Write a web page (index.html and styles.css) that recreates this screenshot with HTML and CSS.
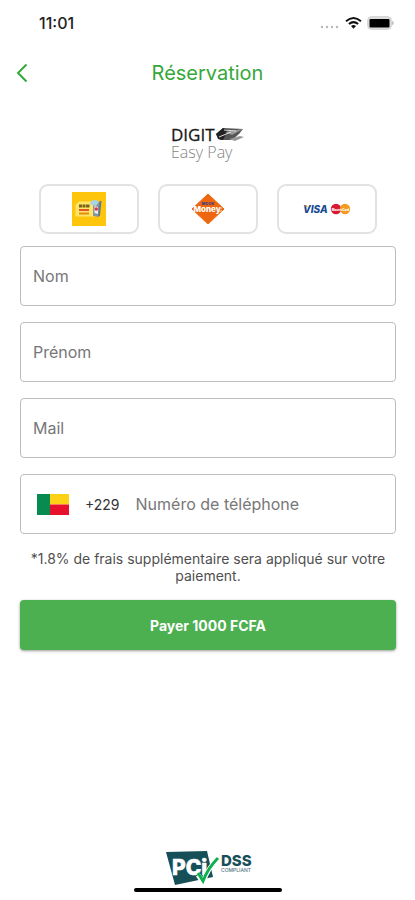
FILE: index.html
```html
<!DOCTYPE html>
<html lang="fr">
<head>
<meta charset="utf-8">
<meta name="viewport" content="width=device-width, initial-scale=1">
<title>Réservation</title>
<link rel="stylesheet" href="styles.css">
</head>
<body>
<div class="screen">
  <div class="status">
    <span class="clock">11:01</span>
    <span class="indicators">
      <svg width="20" height="14" viewBox="0 0 20 14" fill="#b8b8b8" aria-hidden="true">
        <circle cx="2" cy="11" r="1.2"/><circle cx="7" cy="11" r="1.2"/><circle cx="12" cy="11" r="1.2"/><circle cx="17" cy="11" r="1.2"/>
      </svg>
      <svg width="17" height="14" viewBox="0 0 17 14" fill="none" stroke="#111" stroke-width="2" aria-hidden="true">
        <path d="M1 5.200Q8.500-1.300 16 5.200"/><path d="M3.900 8.100Q8.500 4.100 13.100 8.100"/><path d="M6 9.900Q8.500 7.900 11 9.900L8.500 12.700Z" fill="#111" stroke="none"/>
      </svg>
      <svg width="28" height="14" viewBox="0 0 28 14" aria-hidden="true">
        <rect x=".7" y=".7" width="23.600" height="12.600" rx="3.500" fill="#dedede" stroke="#cfcfcf"/>
        <rect x="2.500" y="3" width="20" height="8.500" rx="1" fill="#000"/>
        <path d="M25.300 4.500Q28 7 25.300 9.500Z" fill="#aaa"/>
      </svg>
    </span>
  </div>

  <header class="header">
    <button class="back" type="button" aria-label="Retour">
      <svg width="12" height="20" viewBox="0 0 12 20" fill="none" stroke="#35a83c" stroke-width="2"><path d="M10.500 1.500L2 10L10.500 18.500"/></svg>
    </button>
    <h1 class="title">Réservation</h1>
  </header>

  <main class="content">
    <svg class="brand" width="76" height="40" viewBox="0 0 76 40" role="img" aria-label="Digit Easy Pay">
      <text x="1" y="17" font-size="17" fill="#181818" stroke="#181818" stroke-width=".3">DIGIT</text>
      <text class="thin" x="1" y="34" font-size="16" fill="#858585">Easy Pay</text>
      <path d="M46 10L53 4L73 5L69 10L62 16L50 16Z" fill="#555"/>
      <path d="M46 10L53 4L58 6L53 16L48 15Z" fill="#222"/>
      <path d="M55 8L73 5L62 11ZM59 15L70 12L74 13L65 17Z" fill="#999"/>
      <path d="M49 13L61 8M54 6L66 7" stroke="#ddd"/>
    </svg>

    <div class="methods">
      <button class="method" type="button" aria-label="MTN Mobile Money">
        <svg width="34" height="34" viewBox="0 0 34 34">
          <path fill="#fdc50b" d="M0 0h34v34H0z"/>
          <path d="M7 10h16v14H4V13z" fill="#ffe668" stroke="#ffe668" stroke-linejoin="round"/>
          <path d="M7 14h11" stroke="#796315" stroke-width="3" stroke-dasharray="3 .5"/>
          <path d="M7 18h10" stroke="#e6542b" stroke-width="2"/>
          <path d="M7 21.500h10" stroke="#e48a10" stroke-width="2"/>
          <path d="M21 10L29 10L27 25L21 24Z" fill="#8795a0"/>
          <path d="M18 11Q22 5 27 10L24 14L19 13Z" fill="#a9d4df"/>
          <path d="M28.500 9L27 24" stroke="#667a88" stroke-width="2"/>
          <path d="M22.500 14l3.500 1v7l-3.500-1z" fill="#e9edf0"/><circle cx="24.300" cy="17" r="1.700" fill="#dc3448"/>
        </svg>
      </button>
      <button class="method" type="button" aria-label="Moov Money">
        <svg width="34" height="34" viewBox="0 0 34 34">
          <path d="M17 2L33 17L17 32L1 17Z" fill="#ee6710" stroke="#ee6710" stroke-linejoin="round"/>
          <text class="heavy" x="17" y="13" text-anchor="middle" font-size="4" fill="#373c87">MOOV</text>
          <text class="heavy" x="16" y="20" text-anchor="middle" font-size="8" fill="#fff">Money</text>
          <path d="M28 16h3M28 19h3" stroke="#ffd7bd"/>
        </svg>
      </button>
      <button class="method" type="button" aria-label="Visa ou Mastercard">
        <svg width="48" height="14" viewBox="0 0 48 14">
          <text class="heavy slant" x="0" y="11" font-size="10" fill="#174a93">VISA</text>
          <path d="M1 3.500h3l1 2z" fill="#e9a52d"/>
          <circle cx="33" cy="7" r="5.200" fill="#d71932"/><circle cx="42" cy="7" r="5.200" fill="#f49a20"/>
          <text class="heavy" x="37.500" y="8.500" text-anchor="middle" font-size="3" fill="#fff">MasterCard</text>
        </svg>
      </button>
    </div>

    <form class="form">
      <input class="field" type="text" placeholder="Nom" aria-label="Nom">
      <input class="field" type="text" placeholder="Prénom" aria-label="Prénom">
      <input class="field" type="email" placeholder="Mail" aria-label="Mail">
      <div class="field phone">
        <svg width="32" height="21" viewBox="0 0 32 21" role="img" aria-label="Bénin">
          <path fill="#078b50" d="M0 0h13v21H0z"/><path fill="#fcd116" d="M13 0h19v10.500H13z"/><path fill="#e8112d" d="M13 10.500h19V21H13z"/>
        </svg>
        <span class="code">+229</span>
        <input class="number" type="tel" placeholder="Numéro de téléphone" aria-label="Numéro de téléphone">
      </div>
      <p class="note">*1.8% de frais supplémentaire sera appliqué sur votre paiement.</p>
      <button class="pay" type="button">Payer 1000 FCFA</button>
    </form>
  </main>

  <footer class="footer">
    <svg width="90" height="36" viewBox="0 0 90 36" role="img" aria-label="PCI DSS Compliant">
      <path d="M3 2L44 1L50 27L12 35Z" fill="#174f59"/>
      <text class="heavy" x="9" y="25" font-size="21" fill="#fff" stroke="#fff" stroke-width=".6">PCi</text>
      <path d="M35 25L40 32Q45 18 54 10" fill="none" stroke="#fff" stroke-width="5"/>
      <path d="M35 23L40 31Q45 18 55 8" fill="none" stroke="#0db14b" stroke-width="3"/>
      <text class="heavy" x="58" y="16" font-size="15" fill="#174f59">DSS</text>
      <text class="light" x="58" y="22" font-size="5" fill="#53777e">COMPLIANT</text>
    </svg>
    <div class="home"></div>
  </footer>
</div>
</body>
</html>
```
FILE: styles.css
```css
* {
  box-sizing: border-box;
}

body {
  margin: 0;
  background: #fff;
  font-family: Inter, "Liberation Sans", sans-serif;
}

button,
input {
  font: inherit;
}

.screen {
  display: flex;
  flex-direction: column;
  min-height: 100vh;
}

.status {
  display: flex;
  align-items: center;
  justify-content: space-between;
  height: 46px;
  padding: 0 20px 0 39px;
}

.clock {
  font-size: 16px;
  font-weight: 500;
  color: #222;
}

.indicators {
  display: flex;
  align-items: center;
  gap: 5px;
}

.header {
  display: grid;
  grid-template-columns: 44px 1fr 44px;
  align-items: center;
  height: 54px;
}

.back {
  display: flex;
  justify-content: center;
  padding: 12px 0;
  border: 0;
  background: none;
}

.title {
  margin: 0;
  text-align: center;
  font-size: 20px;
  font-weight: 400;
  color: #35a83c;
}

.content {
  display: flex;
  flex-direction: column;
  align-items: stretch;
  padding: 24px 19px 0 20px;
}

.brand {
  align-self: center;
  font-family: "Open Sans", sans-serif;
}

.thin {
  font-weight: 300;
}

.heavy {
  font-weight: 800;
}

.light {
  font-weight: 500;
}

.slant {
  font-style: italic;
}

.methods {
  display: grid;
  grid-template-columns: repeat(3, 1fr);
  gap: 19px;
  margin: 20px 19px 12px;
}

.method {
  display: flex;
  align-items: center;
  justify-content: center;
  height: 50px;
  padding: 0;
  border: 2px solid #e2e2e2;
  border-radius: 9px;
  background: #fff;
}

.form {
  display: flex;
  flex-direction: column;
  gap: 16px;
}

.field {
  width: 100%;
  height: 60px;
  padding: 0 12px;
  border: 1px solid #bdbdbd;
  border-radius: 4px;
  background: #fff;
  font-size: 16px;
  color: #333;
}

.field::placeholder,
.number::placeholder {
  color: #777;
  opacity: 1;
}

.phone {
  display: flex;
  align-items: center;
  gap: 16px;
  padding-left: 16px;
}

.code {
  font-size: 14px;
}

.number {
  flex: 1;
  min-width: 0;
  padding: 0;
  border: 0;
  background: none;
}

.note {
  margin: 0;
  text-align: center;
  font-size: 14px;
  line-height: 17px;
  color: #505050;
}

.pay {
  height: 50px;
  border: 0;
  border-radius: 4px;
  background: #4caf50;
  box-shadow: 0 1px 3px rgba(0, 0, 0, 0.4);
  font-size: 14px;
  font-weight: 700;
  color: #fff;
}

.footer {
  display: flex;
  flex-direction: column;
  align-items: center;
  gap: 2px;
  margin-top: auto;
  padding-bottom: 8px;
}

.home {
  width: 148px;
  height: 4px;
  border-radius: 2px;
  background: #000;
}
```
